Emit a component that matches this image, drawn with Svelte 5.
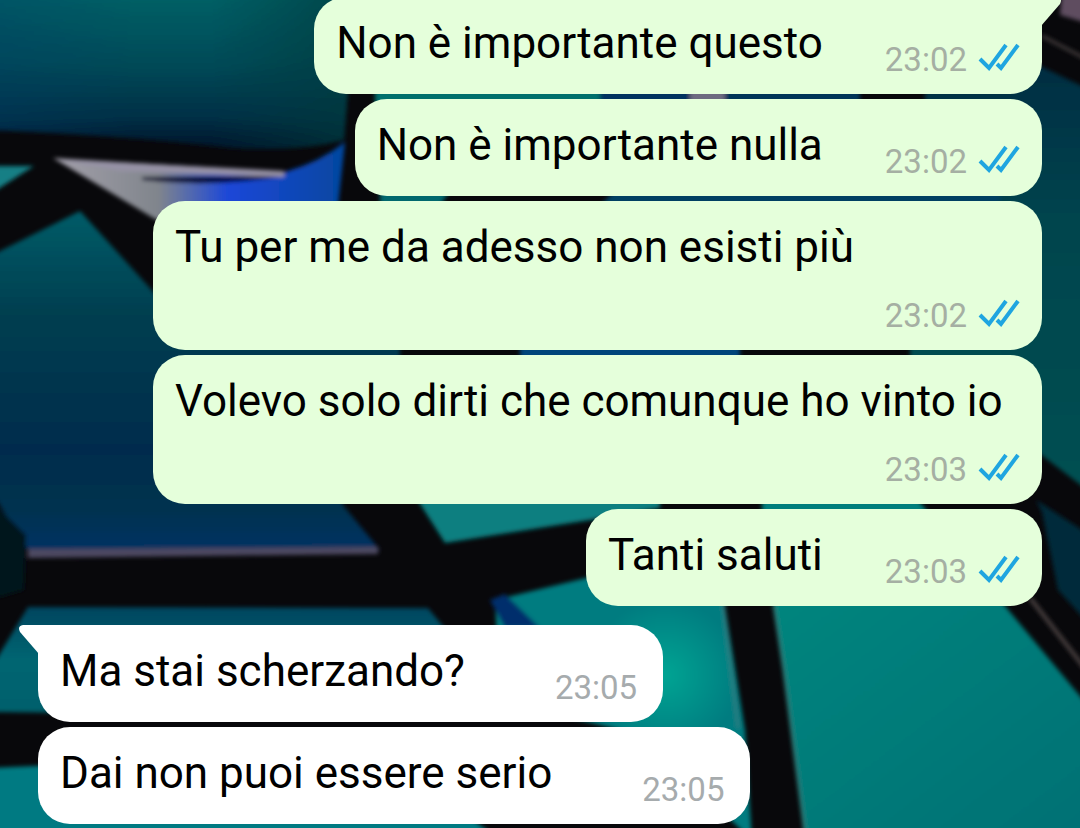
<script>
  const messages = [
    { text: 'Non è importante questo', time: '23:02', mine: true, tail: true },
    { text: 'Non è importante nulla', time: '23:02', mine: true },
    { text: 'Tu per me da adesso non esisti più', time: '23:02', mine: true },
    { text: 'Volevo solo dirti che comunque ho vinto io', time: '23:03', mine: true },
    { text: 'Tanti saluti', time: '23:03', mine: true },
    { text: 'Ma stai scherzando?', time: '23:05', mine: false, tail: true },
    { text: 'Dai non puoi essere serio', time: '23:05', mine: false },
  ];
</script>

<main class="chat">
  <svg class="wallpaper" viewBox="0 0 1080 828" preserveAspectRatio="xMidYMid slice" aria-hidden="true">
    <defs>
      <linearGradient id="sky" x1="0" y1="0" x2="0" y2="1">
        <stop offset="0" stop-color="#006267" />
        <stop offset="0.45" stop-color="#004b58" />
        <stop offset="0.8" stop-color="#003046" />
        <stop offset="1" stop-color="#02142a" />
      </linearGradient>
      <linearGradient id="skySide">
        <stop offset="0" stop-color="#003a68" stop-opacity="0.3" />
        <stop offset="0.4" stop-color="#003a68" stop-opacity="0" />
        <stop offset="0.6" stop-color="#003a3c" stop-opacity="0" />
        <stop offset="1" stop-color="#003a3c" stop-opacity="0.7" />
      </linearGradient>
      <linearGradient id="deep" x1="0" y1="0" x2="0" y2="1">
        <stop offset="0" stop-color="#005c68" />
        <stop offset="0.3" stop-color="#003f50" />
        <stop offset="0.7" stop-color="#002c4d" />
        <stop offset="0.88" stop-color="#00324f" />
        <stop offset="1" stop-color="#003163" />
      </linearGradient>
      <linearGradient id="wing">
        <stop offset="0" stop-color="#a3a0aa" />
        <stop offset="0.36" stop-color="#80858c" />
        <stop offset="0.6" stop-color="#1c47d8" />
        <stop offset="1" stop-color="#04479f" />
      </linearGradient>
      <linearGradient id="side" x1="0" y1="0" x2="0" y2="1">
        <stop offset="0" stop-color="#002d42" />
        <stop offset="0.35" stop-color="#00444e" />
        <stop offset="1" stop-color="#005052" />
      </linearGradient>
      <linearGradient id="strip" x1="0" y1="0" x2="0" y2="1">
        <stop offset="0" stop-color="#04455f" />
        <stop offset="0.5" stop-color="#056672" />
        <stop offset="1" stop-color="#05606c" />
      </linearGradient>
      <linearGradient id="teal" x1="0" y1="0" x2="1" y2="1">
        <stop offset="0" stop-color="#00857e" />
        <stop offset="1" stop-color="#007074" />
      </linearGradient>
      <radialGradient id="glow" gradientUnits="userSpaceOnUse" cx="665" cy="675" r="75">
        <stop offset="0" stop-color="#00a493" />
        <stop offset="1" stop-color="#007c80" />
      </radialGradient>
      <filter id="soft" x="0" y="0" width="1" height="1">
        <feGaussianBlur stdDeviation="2" />
      </filter>
    </defs>
    <rect width="1080" height="828" fill="#08080b" />
    <g filter="url(#soft)">
      <path d="M-10 -10H356L344 140Q300 152 230 148Q130 136 -10 130Z" fill="url(#sky)" />
      <path d="M-10 -10H356L344 140Q300 152 230 148Q130 136 -10 130Z" fill="url(#skySide)" />
      <path d="M-10 166L34 166L-10 194Z" fill="#147f85" />
      <path d="M53 158L285 172Q320 162 345 142L338 206L180 230L155 219Z" fill="url(#wing)" />
      <path d="M142 177L284 176Q210 188 142 180Z" fill="#02052f" />
      <path d="M55 159L284 171V177L120 171Z" fill="#9692a6" />
      <path d="M-10 256L80 211L158 297L400 345V360L342 504L380 550H28L-10 490Z" fill="url(#deep)" />
      <path d="M28 549L378 547V554L28 558Z" fill="#4d4a62" />
      <path d="M-10 500L26 535L24 590L-10 600Z" fill="#01191a" />
      <path d="M-10 670L28 607L428 608L446 630V700L200 714L-10 712Z" fill="url(#strip)" />
      <path d="M-10 768L80 764H400L500 840H-10Z" fill="#007a82" />
      <path d="M375 88H600V106H375Z" fill="#016f6c" />
      <path d="M600 88H690V106H600Z" fill="#02325e" />
      <path d="M690 88H725V106H690Z" fill="#6d6a80" />
      <path d="M725 88H860V106H725Z" fill="#023458" />
      <path d="M380 190H450L440 206H380Z" fill="#05686d" />
      <path d="M615 190H1050V206H600Z" fill="#003f62" />
      <path d="M520 340H740V362H520Z" fill="#02457a" />
      <path d="M910 340H1050V362H910Z" fill="#004c50" />
      <path d="M415 496H660V508L590 520L445 543Z" fill="#087f80" />
      <path d="M762 496H915L930 515H762Z" fill="#037e7c" />
      <path d="M495 600L590 577L722 570L725 606L745 730L752 840L640 735L500 700Z" fill="url(#glow)" />
      <path d="M490 600L505 594L540 628H505Z" fill="#052f6c" />
      <path d="M774 600L1000 600L1090 708V840H806Z" fill="url(#teal)" />
      <path d="M774 604L784 670L806 840" fill="none" stroke="#297f7c" stroke-width="3" />
      <path d="M723 604L738 728" fill="none" stroke="#397c80" stroke-width="2" />
      <path d="M925 86L1040 66L1090 90V492L1040 454L1000 350V110H925Z" fill="url(#side)" />
      <path d="M1062 -10H1090V24L1060 15Z" fill="#5e4d60" />
      <path d="M1042 36L1090 61" stroke="#47413f" stroke-width="3" />
      <path d="M1042 512L1036 500L1090 535V625L1058 590Z" fill="#012a3b" />
      <path d="M1030 598L1090 675" stroke="#48403f" stroke-width="4" />
    </g>
  </svg>

  <ol class="messages">
    {#each messages as message}
      <li class="bubble" class:mine={message.mine} class:tail={message.tail}>
        {#if message.tail}
          <svg class="beak" viewBox="0 0 20 29" aria-hidden="true">
            <path d="M20 0H4Q-2 1 1 7L20 29Z" fill="currentColor" />
          </svg>
        {/if}
        <span class="text">{message.text}</span>
        <span class="meta">
          <time>{message.time}</time>
          {#if message.mine}
            <svg class="ticks" viewBox="0 0 42 28" role="img" aria-label="Letto">
              <path d="M2 15L11 24L28 1M19 20L23 24L40 1" />
            </svg>
          {/if}
        </span>
      </li>
    {/each}
  </ol>
</main>

<style>
  :global(body) {
    margin: 0;
    background: #08080b;
  }

  .chat {
    position: relative;
    min-height: 100vh;
    overflow: hidden;
    font-family: Roboto, "Noto Sans", sans-serif;
  }

  .wallpaper {
    position: absolute;
    inset: 0;
    width: 100%;
    height: 100%;
  }

  .messages {
    position: relative;
    display: flex;
    flex-direction: column;
    align-items: flex-start;
    gap: 5px;
    margin: -3px 0 0;
    padding: 0 38px 4px;
    list-style: none;
  }

  .bubble {
    position: relative;
    display: flex;
    flex-wrap: wrap;
    align-items: flex-end;
    justify-content: space-between;
    gap: 20px 90px;
    box-sizing: border-box;
    max-width: calc(100% - 115px);
    padding: 14px 26px 18px 22px;
    border-radius: 32px;
    background: #fff;
    color: #fff;
  }

  .mine {
    align-self: flex-end;
    column-gap: 62px;
    padding-right: 22px;
    background: #e5ffdb;
    color: #e5ffdb;
  }

  .tail {
    border-top-left-radius: 0;
  }

  .mine.tail {
    border-top-left-radius: 32px;
    border-top-right-radius: 0;
  }

  .mine + .bubble:not(.mine) {
    margin-top: 14px;
  }

  .beak {
    position: absolute;
    top: 0;
    right: calc(100% - 1px);
    width: 20px;
    height: 29px;
  }

  .mine .beak {
    right: auto;
    left: calc(100% - 1px);
    transform: scaleX(-1);
  }

  .text {
    padding-bottom: 1px;
    font-size: 44px;
    line-height: 64px;
    color: #000;
  }

  .meta {
    display: flex;
    align-items: flex-start;
    gap: 11px;
    margin-left: auto;
    font-size: 33px;
    line-height: 32px;
    color: #a6abad;
  }

  .mine .meta {
    color: #a5afa3;
  }

  .ticks {
    width: 42px;
    height: 28px;
    overflow: visible;
    fill: none;
    stroke: #1fa5e0;
    stroke-width: 4;
  }
</style>
